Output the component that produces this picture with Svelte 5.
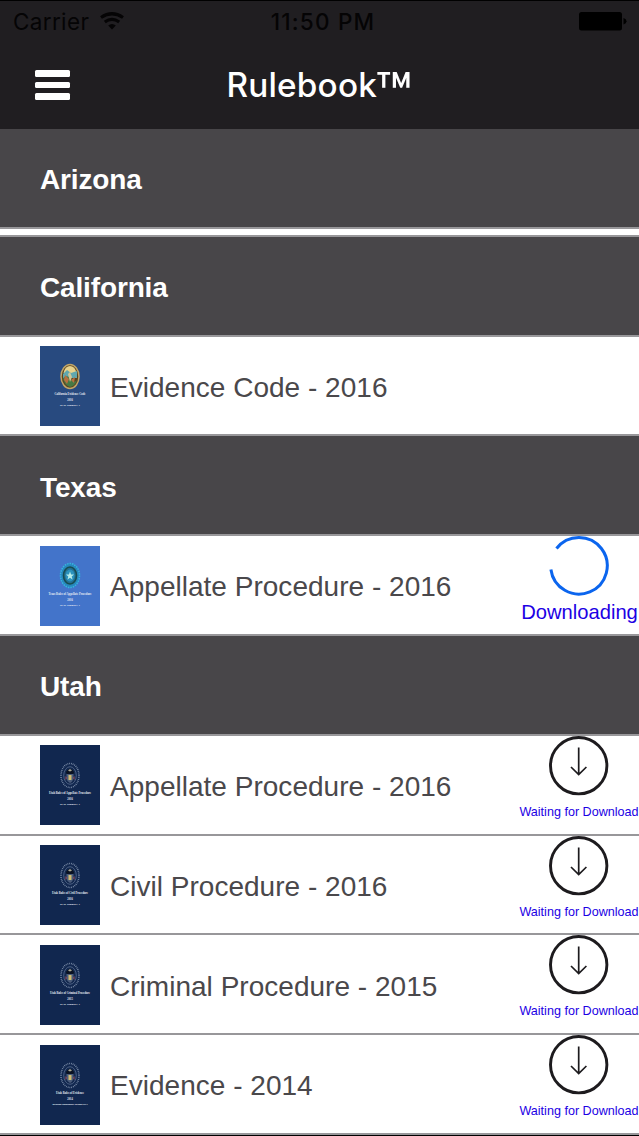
<script>
  const sections = [
    { name: 'Arizona', books: [] },
    {
      name: 'California',
      books: [
        { title: 'Evidence Code - 2016', cover: 'california', lines: ['California Evidence Code', '2016', 'as of January 1'], width: 31, status: 'ready' }
      ]
    },
    {
      name: 'Texas',
      books: [
        { title: 'Appellate Procedure - 2016', cover: 'texas', lines: ['Texas Rules of Appellate Procedure', '2016', 'as of January 1'], width: 43, status: 'downloading' }
      ]
    },
    {
      name: 'Utah',
      books: [
        { title: 'Appellate Procedure - 2016', cover: 'utah', lines: ['Utah Rules of Appellate Procedure', '2016', 'as of January 1'], width: 42, status: 'waiting' },
        { title: 'Civil Procedure - 2016', cover: 'utah', lines: ['Utah Rules of Civil Procedure', '2016', 'as of January 1'], width: 36, status: 'waiting' },
        { title: 'Criminal Procedure - 2015', cover: 'utah', lines: ['Utah Rules of Criminal Procedure', '2015', 'as of January 1'], width: 40, status: 'waiting' },
        { title: 'Evidence - 2014', cover: 'utah', lines: ['Utah Rules of Evidence', '2014', 'including amendments through 2014'], width: 28, status: 'waiting' }
      ]
    }
  ];
</script>

<div class="app">
  <header>
    <div class="status-bar">
      <span class="carrier">
        Carrier
        <svg class="wifi" width="24" height="18" viewBox="0 0 24 18">
          <path d="M1 5.5Q12 -2 23 5.5" />
          <path d="M4.8 10Q12 4.7 19.2 10" />
          <path class="dot" d="M12 17.5L8.200 13.500Q12 10.400 15.800 13.500Z" />
        </svg>
      </span>
      <span class="time">11:50 PM</span>
      <svg class="battery" width="49" height="19" viewBox="0 0 49 19">
        <rect x="1" width="43" height="18.500" rx="2.500" />
        <path d="M45.500 6Q48.500 7 48.500 9.250T45.500 12.500Z" />
      </svg>
    </div>
    <div class="nav-bar">
      <button class="menu" aria-label="Menu">
        <span></span>
        <span></span>
        <span></span>
      </button>
      <h1>Rulebook<span class="mark">™</span></h1>
    </div>
  </header>

  <main>
    {#each sections as section}
      <section class:empty={section.books.length === 0}>
        <h2>{section.name}</h2>
        {#each section.books as book}
          <article>
            <svg class="cover {book.cover}" width="60" height="80" viewBox="0 0 60 80">
              <rect class="back" width="60" height="80" />
              {#if book.cover === 'california'}
                <ellipse cx="30" cy="30.500" rx="9" ry="12" fill="#5b4420" stroke="#c0a567" stroke-width="1.500" />
                <path d="M23.500 27Q25 20 30 20T36.500 27Z" fill="#e8d28b" />
                <path d="M23 28L27 24L31 27L37 25V32H23Z" fill="#60a7ae" />
                <path d="M23 32Q28 28 31 33T37 34Q35 40 30 41Q24 39 23 32Z" fill="#477944" />
                <path d="M25 29L29 33L27 38L24 34ZM31 34L35 31L34 37Z" fill="#b9703f" />
                <path d="M28 28L30 26L32 31L30 36Z" fill="#cfc596" />
              {:else if book.cover === 'texas'}
                <ellipse cx="30" cy="29.500" rx="9.500" ry="12" fill="#2787bd" stroke="#35b6dd" stroke-width="1.500" stroke-dasharray="1.500 1" />
                <ellipse cx="30" cy="29.500" rx="6.500" ry="8.500" fill="#246f91" stroke="#174d50" stroke-width="1.600" />
                <ellipse cx="30" cy="29.500" rx="4.500" ry="6" fill="#2b93bd" />
                <path d="M30 25.500L31.100 28.500H34L31.700 30.500L32.500 33.500L30 31.700L27.500 33.500L28.300 30.500L26 28.500H28.900Z" fill="#b7edea" />
              {:else}
                <ellipse cx="30" cy="30.500" rx="9" ry="12" fill="none" stroke="#8495b0" stroke-width="1.500" stroke-dasharray=".8 1" />
                <ellipse cx="30" cy="30.500" rx="6.300" ry="8.800" fill="#14294f" stroke="#637799" stroke-width=".7" />
                <path d="M26 28Q26.500 24 30 24.500Q33.500 24 34 28L32 30H28Z" fill="#0b1222" />
                <path d="M28 25.500L30 24L32 25.500L30 26.500Z" fill="#a9a995" />
                <path d="M26.500 29H33.500V34Q32 37 30 38Q27 36 26.500 34Z" fill="#4c5d7b" />
                <path d="M28.500 30H31.500V35H28.500Z" fill="#d0bd70" />
                <path d="M25.500 31V35L27 33ZM34.500 31V35L33 33Z" fill="#9a4a5e" />
              {/if}
              <text x="30" y="48.500" textLength={book.width} lengthAdjust="spacingAndGlyphs">{book.lines[0]}</text>
              <text x="30" y="54.500" textLength="5.500" lengthAdjust="spacingAndGlyphs">{book.lines[1]}</text>
              <text class="small" x="30" y="59.500" textLength={book.title.startsWith('Evidence -') ? 35 : 20} lengthAdjust="spacingAndGlyphs">{book.lines[2]}</text>
            </svg>
            <h3>{book.title}</h3>
            {#if book.status === 'downloading'}
              <div class="state">
                <svg width="62" height="62" viewBox="0 0 62 62">
                  <path class="progress" d="M8.500 13.500A28.300 28.300 0 1 1 2.900 34.500" />
                </svg>
                <span class="downloading">Downloading</span>
              </div>
            {:else if book.status === 'waiting'}
              <div class="state">
                <svg width="62" height="62" viewBox="0 0 62 62">
                  <circle cx="30.700" cy="30.700" r="28.200" />
                  <path class="arrow" d="M30.700 12.500V39.500M23 32L30.700 39.500L38.400 32" />
                </svg>
                <span>Waiting for Download</span>
              </div>
            {/if}
          </article>
        {/each}
      </section>
    {/each}
  </main>
</div>

<style>
  :global(body) {
    margin: 0;
    background: #000;
  }

  .app {
    width: 639px;
    height: 1136px;
    overflow: hidden;
    background: #000;
    font-family: "Liberation Sans", Arial, sans-serif;
  }

  header {
    box-sizing: border-box;
    height: 128.800px;
    border-top: 1px solid #000;
    background: #201e21;
  }

  .status-bar {
    display: grid;
    grid-template-columns: 1fr auto 1fr;
    align-items: center;
    height: 42px;
    padding: 0 12px 0 13px;
    color: #050405;
    font: 400 22.500px/26px Inter, sans-serif;
  }

  .carrier {
    display: flex;
    align-items: center;
    gap: 11px;
    letter-spacing: .35px;
  }

  .wifi {
    margin-top: -2px;
    fill: none;
    stroke: #050405;
    stroke-width: 3.200;
  }

  .wifi .dot {
    fill: #050405;
    stroke: none;
  }

  .time {
    padding-left: 6px;
    font-weight: 500;
    letter-spacing: 1.200px;
  }

  .battery {
    justify-self: end;
    margin-top: -1px;
    fill: #000;
  }

  .nav-bar {
    display: grid;
    grid-template-columns: 1fr auto 1fr;
    align-items: center;
    height: 84px;
    padding: 0 35px;
  }

  .menu {
    display: flex;
    flex-direction: column;
    gap: 5px;
    width: 34.500px;
    padding: 0;
    border: 0;
    background: none;
  }

  .menu span {
    height: 6.500px;
    border-radius: 1.500px;
    background: #fff;
  }

  h1 {
    margin: 0;
    color: #fff;
    font: 500 33.300px/40px Inter, sans-serif;
    letter-spacing: .2px;
    white-space: nowrap;
  }

  .mark {
    margin-left: -2px;
    font-size: 60px;
    line-height: 0;
    vertical-align: -19px;
  }

  main {
    background: #fff;
  }

  h2,
  article {
    box-sizing: border-box;
    height: 99.800px;
    margin: 0;
    border-bottom: 2px solid #98979a;
  }

  h2 {
    display: flex;
    align-items: center;
    padding: 4.600px 40px 0;
    background: #484649;
    color: #fff;
    font-size: 28px;
    font-weight: 700;
    letter-spacing: -.15px;
  }

  .empty {
    padding-bottom: 6.200px;
    border-bottom: 2px solid #98979a;
  }

  article {
    display: flex;
    align-items: flex-start;
    background: #fff;
  }

  .cover {
    flex: none;
    margin: 9.500px 10px 0 40px;
  }

  .california .back {
    fill: #284a7f;
  }

  .texas .back {
    fill: #4374ca;
  }

  .utah .back {
    fill: #11274f;
  }

  .cover text {
    fill: #e8edf4;
    font: 700 3.200px "Liberation Serif", serif;
    text-anchor: middle;
  }

  .cover .small {
    font-size: 2.500px;
  }

  h3 {
    flex: 1;
    margin: 34.200px 0 0;
    color: #4a484b;
    font-size: 28px;
    font-weight: 400;
    letter-spacing: .02px;
    line-height: 34px;
    white-space: nowrap;
  }

  .state {
    display: flex;
    flex-direction: column;
    align-items: center;
    width: 120px;
    color: #1c00e4;
    font-size: 12.600px;
    line-height: 20px;
    white-space: nowrap;
  }

  .state svg {
    flex: none;
    margin-top: -1px;
  }

  .state span {
    margin-top: 5px;
  }

  .state .downloading {
    margin: 3px 0 0 1px;
    font-size: 20.200px;
    line-height: 24px;
  }

  .state circle {
    fill: none;
    stroke: #1d1b1e;
    stroke-width: 2.900;
  }

  .arrow {
    fill: none;
    stroke: #1d1b1e;
    stroke-width: 1.700;
  }

  .progress {
    fill: none;
    stroke: #0b65ee;
    stroke-width: 3;
  }
</style>
